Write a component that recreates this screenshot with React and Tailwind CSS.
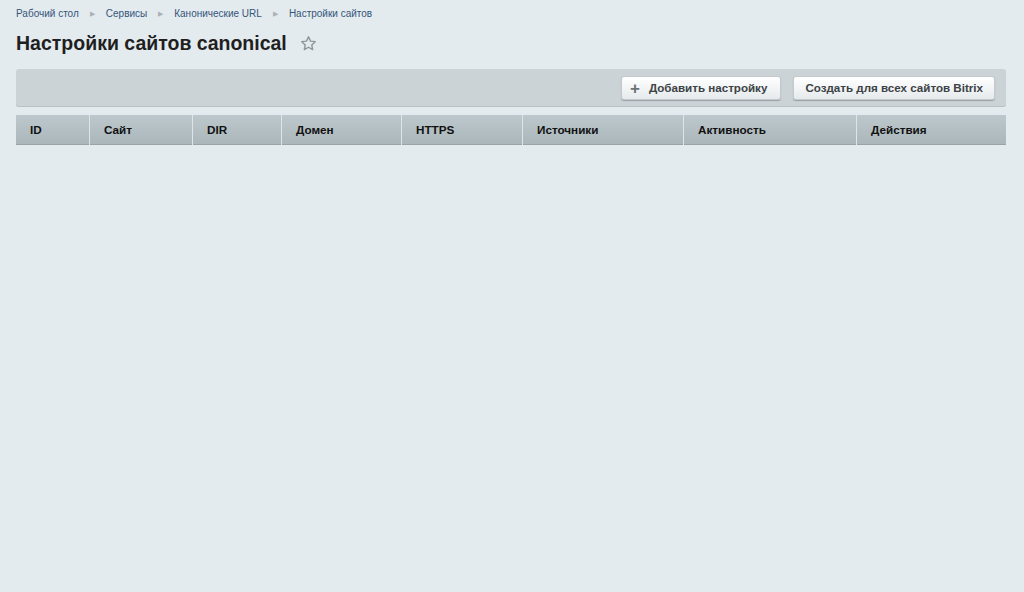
import React from "react";

const crumbs = ["Рабочий стол", "Сервисы", "Канонические URL", "Настройки сайтов"];

const columns = [
  { title: "ID", w: "w-[73px]" },
  { title: "Сайт", w: "w-[103px]" },
  { title: "DIR", w: "w-[89px]" },
  { title: "Домен", w: "w-[120px]" },
  { title: "HTTPS", w: "w-[121px]" },
  { title: "Источники", w: "w-[161px]" },
  { title: "Активность", w: "w-[173px]" },
  { title: "Действия", w: "flex-1" },
];

const App = () => {
  return (
    <div className="min-h-[592px] bg-[#e4ebee] pl-4 pr-[18px] font-['Liberation_Sans',Arial,sans-serif]">
      <div className="flex items-center pt-[8px] text-[10px] leading-[12px]">
        {crumbs.map((c, i) => (
          <React.Fragment key={c}>
            {i > 0 && (
              <span className="mx-[11px] text-[7px] text-[#a9b2b7]">&#9654;</span>
            )}
            <span className="text-[#34557a]">{c}</span>
          </React.Fragment>
        ))}
      </div>

      <div className="mt-[12px] flex items-center">
        <h1 className="text-[19.5px] font-bold leading-[22px] text-[#1f1f1f]">Настройки сайтов canonical</h1>
        <svg className="ml-[13px] mt-[1px]" width="17" height="17" viewBox="0 0 24 24" fill="none" stroke="#8d969b" strokeWidth="2" strokeLinejoin="round">
          <path d="M12 2.5l2.9 6.1 6.6.8-4.9 4.6 1.3 6.6L12 17.3l-5.9 3.3 1.3-6.6-4.9-4.6 6.6-.8z" />
        </svg>
      </div>

      <div className="mt-[15px] flex h-[38px] items-center justify-end gap-[12px] rounded-[3px] bg-[#cbd3d7] pr-[11px] shadow-[inset_0_-1px_0_#b8c1c6]">
        <button className="flex h-[24px] items-center rounded-[3px] border border-[#c3c9cc] bg-gradient-to-b from-[#ffffff] to-[#e6eaec] pl-[8px] pr-[13px] text-[11.6px] font-bold text-[#3c4245] shadow-[0_1px_1px_rgba(0,0,0,0.25)]">
          <span className="mr-[9px] text-[17px] leading-none text-[#6b7377]">+</span>
          Добавить настройку
        </button>
        <button className="flex h-[24px] items-center rounded-[3px] border border-[#c3c9cc] bg-gradient-to-b from-[#ffffff] to-[#e6eaec] px-[11px] text-[11.6px] font-bold text-[#3c4245] shadow-[0_1px_1px_rgba(0,0,0,0.25)]">
          Создать для всех сайтов Bitrix
        </button>
      </div>

      <div className="mt-[8px] flex h-[30px] bg-gradient-to-b from-[#bdc8cc] to-[#aab6ba] shadow-[inset_0_-1px_0_#97a3a8]">
        {columns.map((col, i) => (
          <div
            key={col.title}
            className={`${col.w} flex items-center pl-[14px] text-[11.7px] font-bold text-[#111] ${i > 0 ? "border-l border-[#dfe5e7]" : ""}`}
          >
            {col.title}
          </div>
        ))}
      </div>
    </div>
  );
};

export default App;
